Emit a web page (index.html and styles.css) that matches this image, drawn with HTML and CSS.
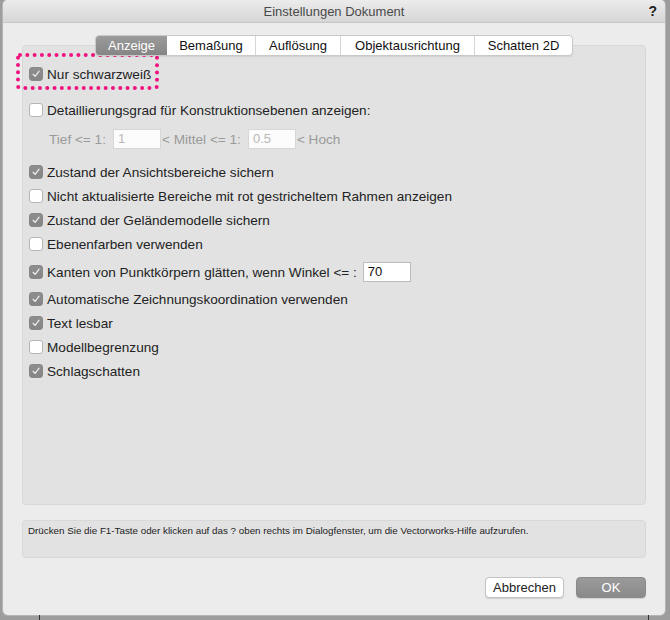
FILE: index.html
```html
<!DOCTYPE html>
<html lang="de">
<head>
<meta charset="utf-8">
<title>Einstellungen Dokument</title>
<link rel="stylesheet" href="styles.css">
</head>
<body>
<div class="window">
  <div class="titlebar">
    <span class="title">Einstellungen Dokument</span>
    <span class="help">?</span>
  </div>
  <div class="content">
    <div class="tabs">
      <div class="tab active">Anzeige</div>
      <div class="tab w-bem">Bemaßung</div>
      <div class="tab w-auf">Auflösung</div>
      <div class="tab w-obj">Objektausrichtung</div>
      <div class="tab w-sch">Schatten 2D</div>
    </div>
    <div class="panel">
      <div class="row r-first focused">
        <span class="cb checked"><svg viewBox="0 0 14 14"><path d="M3.6 7.3 L6 9.8 L10.6 3.6" /></svg></span>
        <span class="label">Nur schwarzweiß</span>
        <svg class="focus-ring" viewBox="0 0 143 37"><rect x="2" y="2" width="139" height="33" rx="2" /></svg>
      </div>
      <div class="row r-detail">
        <span class="cb"></span>
        <span class="label">Detaillierungsgrad für Konstruktionsebenen anzeigen:</span>
      </div>
      <div class="row r-level disabled">
        <span class="label">Tief &lt;= 1:</span>
        <span class="field">1</span>
        <span class="label">&lt; Mittel &lt;= 1:</span>
        <span class="field">0.5</span>
        <span class="label">&lt; Hoch</span>
      </div>
      <div class="row r-gap9">
        <span class="cb checked"><svg viewBox="0 0 14 14"><path d="M3.6 7.3 L6 9.8 L10.6 3.6" /></svg></span>
        <span class="label">Zustand der Ansichtsbereiche sichern</span>
      </div>
      <div class="row">
        <span class="cb"></span>
        <span class="label">Nicht aktualisierte Bereiche mit rot gestricheltem Rahmen anzeigen</span>
      </div>
      <div class="row">
        <span class="cb checked"><svg viewBox="0 0 14 14"><path d="M3.6 7.3 L6 9.8 L10.6 3.6" /></svg></span>
        <span class="label">Zustand der Geländemodelle sichern</span>
      </div>
      <div class="row">
        <span class="cb"></span>
        <span class="label">Ebenenfarben verwenden</span>
      </div>
      <div class="row r-kanten">
        <span class="cb checked"><svg viewBox="0 0 14 14"><path d="M3.6 7.3 L6 9.8 L10.6 3.6" /></svg></span>
        <span class="label">Kanten von Punktkörpern glätten, wenn Winkel &lt;= :</span>
        <span class="field active-field">70</span>
      </div>
      <div class="row r-auto">
        <span class="cb checked"><svg viewBox="0 0 14 14"><path d="M3.6 7.3 L6 9.8 L10.6 3.6" /></svg></span>
        <span class="label">Automatische Zeichnungskoordination verwenden</span>
      </div>
      <div class="row">
        <span class="cb checked"><svg viewBox="0 0 14 14"><path d="M3.6 7.3 L6 9.8 L10.6 3.6" /></svg></span>
        <span class="label">Text lesbar</span>
      </div>
      <div class="row">
        <span class="cb"></span>
        <span class="label">Modellbegrenzung</span>
      </div>
      <div class="row">
        <span class="cb checked"><svg viewBox="0 0 14 14"><path d="M3.6 7.3 L6 9.8 L10.6 3.6" /></svg></span>
        <span class="label">Schlagschatten</span>
      </div>
    </div>
    <div class="helpbox">Drücken Sie die F1-Taste oder klicken auf das ? oben rechts im Dialogfenster, um die Vectorworks-Hilfe aufzurufen.</div>
    <div class="buttons">
      <div class="btn">Abbrechen</div>
      <div class="btn btn-ok">OK</div>
    </div>
  </div>
</div>
<div class="bottom-lines">
  <span class="bline l1"></span>
  <span class="bline l2"></span>
</div>
</body>
</html>
```

FILE: styles.css
```css
html, body {
  margin: 0;
  padding: 0;
}
body {
  background: #9d9d9d;
  width: 670px;
  height: 620px;
  overflow: hidden;
  font-family: "Liberation Sans", Arial, sans-serif;
  font-size: 13px;
  color: #222;
}
.window {
  margin-left: 3px;
  width: 662px;
  height: 615px;
  background: #ececec;
  border-radius: 5px 5px 5px 5px;
  box-shadow: 0 0 0 1px #b4b4b4;
  overflow: hidden;
  display: flex;
  flex-direction: column;
}
.titlebar {
  position: relative;
  height: 22px;
  flex: 0 0 22px;
  border-bottom: 1px solid #c6c6c6;
  background: linear-gradient(#ececec, #d6d6d6);
  display: flex;
  align-items: center;
  justify-content: center;
}
.title {
  color: #4a4a4a;
  font-size: 13px;
}
.help {
  position: absolute;
  right: 8px;
  top: 3px;
  font-weight: bold;
  font-size: 14px;
  color: #222;
}
.content {
  padding: 12px 19px 0 19px;
  display: flex;
  flex-direction: column;
}
.tabs {
  align-self: center;
  display: flex;
  height: 19px;
  background: #fff;
  border: 1px solid #c9c9c9;
  border-radius: 4px;
  overflow: hidden;
  position: relative;
  z-index: 2;
  box-shadow: 0 1px 1px rgba(0,0,0,0.08);
}
.tab {
  height: 19px;
  line-height: 19px;
  text-align: center;
  border-left: 1px solid #d6d6d6;
  color: #111;
  width: 88px;
}
.tab.active {
  border-left: none;
  width: 71px;
  color: #fff;
  background: linear-gradient(#9b9b9b, #858585);
}
.tab.w-bem { width: 88px; border-left: none; }
.tab.w-auf { width: 84px; }
.tab.w-obj { width: 133px; }
.tab.w-sch { width: 97px; }
.panel {
  margin-top: -11px;
  height: 442px;
  padding: 16px 0 0 6px;
  background: #e2e2e2;
  border: 1px solid #d8d8d8;
  border-radius: 4px;
  display: flex;
  flex-direction: column;
  font-size: 13.6px;
}
.row {
  height: 24px;
  display: flex;
  align-items: center;
  position: relative;
}
.r-detail { margin-top: 12px; }
.r-level { margin-top: 5px; padding-left: 20px; }
.r-gap9 { margin-top: 9px; }
.r-kanten { margin-top: 4px; }
.r-auto { margin-top: 3px; }
.cb {
  width: 12px;
  height: 12px;
  border: 1px solid #b5b5b5;
  background: #fff;
  border-radius: 3px;
  margin-right: 4px;
  flex: 0 0 auto;
  display: flex;
}
.cb svg {
  width: 12px;
  height: 12px;
}
.cb.checked {
  background: linear-gradient(#8e8e8e, #858585);
  border-color: #888;
}
.cb path {
  fill: none;
  stroke: #f2f2f2;
  stroke-width: 1.3;
  stroke-linecap: round;
  stroke-linejoin: round;
}
.label {
  white-space: nowrap;
}
.disabled .label {
  color: #9a9a9a;
}
.field {
  width: 42px;
  height: 18px;
  line-height: 18px;
  padding-left: 4px;
  background: #fcfcfc;
  border: 1px solid #d6d6d6;
  color: #b7b7b7;
  margin: 0 1px 0 7px;
  font-size: 13px;
}
.field.active-field {
  color: #111;
  background: #fff;
  border-color: #bdbdbd;
  margin-left: 6px;
}
.focus-ring {
  position: absolute;
  left: -13px;
  top: -9px;
  width: 143px;
  height: 37px;
  overflow: visible;
}
.focus-ring rect {
  fill: none;
  stroke: #f0137f;
  stroke-width: 4;
  stroke-linecap: round;
  stroke-dasharray: 0 7.3;
}
.helpbox {
  margin-top: 15px;
  height: 31px;
  padding: 4px 5px 1px 5px;
  background: #e2e2e2;
  border: 1px solid #d8d8d8;
  border-radius: 4px;
  font-size: 9.8px;
  color: #222;
}
.buttons {
  margin-top: 19px;
  display: flex;
  justify-content: flex-end;
  gap: 12px;
}
.btn {
  height: 19px;
  line-height: 19px;
  padding: 0 7px;
  background: #fff;
  border: 1px solid #c3c3c3;
  border-radius: 4px;
  font-size: 13px;
  color: #222;
  box-shadow: 0 1px 1px rgba(0,0,0,0.12);
}
.btn-ok {
  width: 54px;
  text-align: center;
  color: #fff;
  background: linear-gradient(#9a9a9a, #8a8a8a);
  border-color: #8a8a8a;
}
.bottom-lines {
  height: 5px;
  position: relative;
}
.bline {
  position: absolute;
  top: 0;
  width: 1px;
  height: 5px;
  background: #333;
}
.bline.l1 { left: 39px; }
.bline.l2 { left: 648px; }
```
